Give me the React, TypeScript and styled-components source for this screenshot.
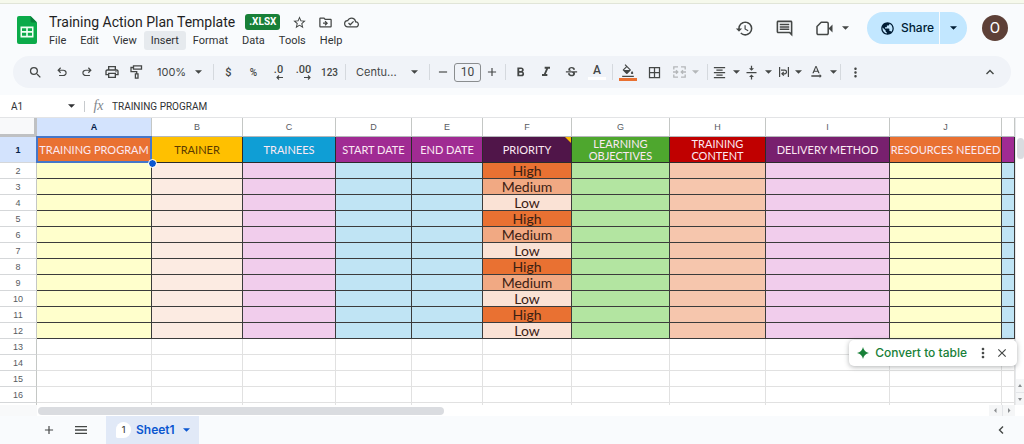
import React from "react";
import styled, { createGlobalStyle, css } from "styled-components";
import {
  MdAdd,
  MdBorderAll,
  MdClose,
  MdFormatAlignCenter,
  MdFormatBold,
  MdFormatColorFill,
  MdFormatItalic,
  MdHistory,
  MdMenu,
  MdMoreVert,
  MdOutlineCloudDone,
  MdOutlineComment,
  MdOutlineDriveFileMove,
  MdOutlinePrint,
  MdPublic,
  MdRemove,
  MdSearch,
  MdStarBorder,
  MdStrikethroughS,
  MdTextRotationNone,
  MdVerticalAlignCenter,
} from "react-icons/md";

const ui = `Roboto, "Liberation Sans", sans-serif`;
const ink = "#444746";

const GlobalStyle = createGlobalStyle`
  *, *::before, *::after { box-sizing: border-box; }
  body { margin: 0; background: #f9fbfd; color: #1f1f1f; font-family: ${ui}; }
  button, input, select {
    font: inherit; color: inherit; margin: 0; padding: 0;
    border: 0; background: none; outline: 0; border-radius: 0;
  }
  button { cursor: pointer; }
  svg { display: block; flex: none; }
`;

const Page = styled.div`
  display: flex;
  flex-direction: column;
  height: 100vh;
  min-height: 300px;
  overflow: hidden;
  border-top: 3px solid #f6f9ec;
`;

const Header = styled.header`
  display: flex;
  align-items: center;
  flex: none;
  height: 53px;
  padding: 0 16px 0 17px;
  border-top: 1px solid #e1e5d8;
`;

const Titles = styled.div`
  display: flex;
  flex-direction: column;
  margin: 3px 0 0 5px;
`;

const TitleRow = styled.div`
  display: flex;
  align-items: center;
  height: 18px;
  padding-left: 7px;
`;

const Title = styled.h1`
  margin: 0;
  font-size: 14px;
  line-height: 18px;
  font-weight: 400;
`;

const FileType = styled.span`
  margin: 0 12px 0 10px;
  padding: 0 4px;
  border-radius: 3px;
  background: #188038;
  color: #fff;
  font-size: 10px;
  font-weight: 700;
  line-height: 16px;
`;

const TitleActions = styled.div`
  display: flex;
  gap: 11px;
  color: ${ink};
`;

const PlainButton = styled.button`
  display: flex;
  align-items: center;
  justify-content: center;
`;

const MenuBar = styled.nav`
  display: flex;
`;

const MenuItem = styled.button<{ $open?: boolean }>`
  height: 19px;
  padding: 0 7px;
  border-radius: 3px;
  font-size: 11px;
  line-height: 19px;
  color: #303234;
  background: ${(p) => (p.$open ? "#e6eaee" : "transparent")};
`;

const HeaderActions = styled.div`
  display: flex;
  align-items: center;
  margin: 0 0 4px auto;
  color: ${ink};
`;

const HeaderIcon = styled(PlainButton)`
  width: 40px;
  height: 32px;
`;

const MeetButton = styled(PlainButton)`
  width: 56px;
  height: 32px;
  gap: 8px;
  margin-right: 7px;
`;

const ShareGroup = styled.div`
  display: flex;
  height: 32px;
  border-radius: 16px;
  overflow: hidden;
  background: #c2e7ff;
  color: #001d35;
`;

const ShareButton = styled(PlainButton)`
  width: 73px;
  gap: 6px;
  padding-left: 8px;
  font: 500 12px/16px Inter, ${ui};
  border-right: 1px solid #f9fbfd;
`;

const ShareMore = styled(PlainButton)`
  width: 27px;
`;

const Avatar = styled.button`
  width: 26px;
  height: 26px;
  margin-left: 15px;
  border-radius: 50%;
  background: #5d4037;
  color: #fff;
  font-size: 15px;
  line-height: 26px;
`;

const Toolbar = styled.div`
  display: flex;
  align-items: center;
  flex: none;
  height: 32px;
  margin: 0 13px 7px;
  padding: 0 9px 0 8px;
  border-radius: 16px;
  background: #f0f3f8;
  color: ${ink};
`;

const Tool = styled.button<{ $w?: number; $dim?: boolean; $small?: boolean }>`
  display: flex;
  align-items: center;
  justify-content: center;
  gap: 6px;
  flex: none;
  width: ${(p) => p.$w ?? 25}px;
  height: 26px;
  font-size: ${(p) => (p.$small ? 10 : 11)}px;
  font-weight: 500;
  color: ${(p) => (p.$dim ? "#b4b7b9" : "inherit")};
`;

const Divider = styled.span`
  flex: none;
  width: 1px;
  height: 16px;
  margin: 0 2px;
  background: #d5d9de;
`;

const Picker = styled.label<{ $w: number }>`
  display: flex;
  align-items: center;
  flex: none;
  width: ${(p) => p.$w}px;
  padding: 0 9px 0 8px;
  select {
    appearance: none;
    flex: 1;
    min-width: 0;
    font: 400 11px/16px Inter, ${ui};
  }
`;

const SizeInput = styled.input`
  flex: none;
  width: 27px;
  height: 19px;
  border: 1px solid #8a8d8f;
  border-radius: 3px;
  text-align: center;
  font-size: 12px;
`;

const Stack = styled.span`
  display: flex;
  flex-direction: column;
  align-items: center;
  gap: 1px;
  font-size: 12px;
  line-height: 12px;
`;

const Swatch = styled.span<{ $color: string }>`
  width: 18px;
  height: 3px;
  background: ${(p) => p.$color};
`;

const Decimal = styled.span`
  display: flex;
  flex-direction: column;
  align-items: flex-end;
  line-height: 10px;
`;

const Spacer = styled.span`
  flex: 1;
`;

const FormulaBar = styled.div`
  display: flex;
  align-items: center;
  flex: none;
  height: 22px;
  background: #fff;
  color: #303234;
  font-size: 10px;
`;

const NameBox = styled.div`
  display: flex;
  align-items: center;
  width: 85px;
  padding: 0 9px 0 11px;
  border-right: 1px solid #c7cacd;
  input { flex: 1; min-width: 0; }
`;

const Fx = styled.span`
  width: 27px;
  text-align: center;
  color: #80868b;
  font: italic 14px/16px "Liberation Serif", serif;
`;

const FormulaInput = styled.input`
  flex: 1;
`;

const GridArea = styled.main`
  position: relative;
  display: flex;
  flex: 1;
  min-height: 0;
  background: #fff;
  border-top: 1px solid #e3e4e6;
`;

const SheetView = styled.div`
  flex: 1;
  min-width: 0;
  overflow: hidden;
`;

const Sheet = styled.table`
  width: 100%;
  table-layout: fixed;
  border-collapse: separate;
  border-spacing: 0;
  font-family: Lato, ${ui};
`;

const Corner = styled.td`
  height: 19px;
  padding: 0;
  background: #f8f9fa;
  border: solid #bfc1c3;
  border-width: 0 3px 3px 0;
`;

const axis = css<{ $on?: boolean }>`
  padding: 0;
  font: ${(p) => (p.$on ? 700 : 400)} 9px/12px "Liberation Sans", sans-serif;
  color: ${(p) => (p.$on ? "#041e49" : "#575b5f")};
  background: ${(p) => (p.$on ? "#d3e3fd" : "#fff")};
`;

const ColumnLabel = styled.th`
  ${axis}
  border-right: 1px solid #c4c7c5;
  border-bottom: 1px solid #b5b8ba;
`;

const RowLabel = styled.th`
  ${axis}
  border-right: 1px solid #c4c7c5;
  border-bottom: 1px solid #d5d7d9;
`;

const HeadCell = styled.td<{ $bg: string; $dark?: boolean }>`
  position: relative;
  height: 26px;
  padding: 0;
  text-align: center;
  white-space: pre;
  font-size: 11px;
  line-height: 12px;
  color: ${(p) => (p.$dark ? "#5a3a00" : "#fbe9f3")};
  background: ${(p) => p.$bg};
  border-right: 1px solid #2b2b2b;
  border-bottom: 1px solid #2b2b2b;
`;

const Selection = styled.span`
  position: absolute;
  inset: -1px -1px -1px -1px;
  border: 2px solid #4577c9;
`;

const FillHandle = styled.span`
  position: absolute;
  right: -5px;
  bottom: -5px;
  z-index: 1;
  width: 7px;
  height: 7px;
  border-radius: 50%;
  background: #0b57d0;
  outline: 1px solid #fff;
`;

const NoteMark = styled.span`
  position: absolute;
  top: 0;
  right: 0;
  border: 3px solid #fbbc04;
  border-left-color: transparent;
  border-bottom-color: transparent;
`;

const Cell = styled.td<{ $bg: string }>`
  height: 16px;
  padding: 0;
  text-align: center;
  font-size: 14px;
  line-height: 15px;
  color: #3a2013;
  background: ${(p) => p.$bg};
  border-right: 1px solid #3b3b3b;
  border-bottom: 1px solid #3b3b3b;
`;

const BlankCell = styled.td`
  height: 16px;
  padding: 0;
  border-right: 1px solid #e1e1e1;
  border-bottom: 1px solid #e1e1e1;
`;

const VScroll = styled.div`
  display: flex;
  flex-direction: column;
  justify-content: space-between;
  flex: none;
  width: 9px;
  padding-top: 20px;
  border-left: 1px solid #e8eaec;
  background: #fff;
`;

const VThumb = styled.span`
  width: 7px;
  height: 21px;
  margin-left: 1px;
  border-radius: 4px;
  background: #dadce0;
`;

const ArrowPair = styled.div<{ $row?: boolean }>`
  display: flex;
  flex-direction: ${(p) => (p.$row ? "row" : "column")};
  color: #8a8d90;
  background: #f5f6f7;
  button { width: ${(p) => (p.$row ? 13 : 8)}px; height: ${(p) => (p.$row ? 11 : 13)}px; }
  button + button { ${(p) => (p.$row ? "border-left" : "border-top")}: 1px solid #e3e5e8; }
`;

const HScroll = styled.div`
  display: flex;
  align-items: center;
  justify-content: space-between;
  flex: none;
  height: 11px;
  padding-right: 9px;
  background: linear-gradient(to right, #f8f9fa 37px, #fff 37px);
`;

const HThumb = styled.span`
  width: 40%;
  height: 8px;
  margin-left: 38px;
  border-radius: 4px;
  background: #dadce0;
`;

const Suggestion = styled.div`
  position: absolute;
  right: 7px;
  bottom: 39px;
  display: flex;
  align-items: center;
  height: 26px;
  padding: 0 6px 0 8px;
  border-radius: 5px;
  background: #fff;
  color: ${ink};
  box-shadow: 0 1px 5px rgba(60, 64, 67, 0.4);
`;

const ConvertButton = styled(PlainButton)`
  gap: 6px;
  margin-right: 6px;
  color: #188038;
  font: 500 12px/16px Inter, ${ui};
`;

const SmallButton = styled(PlainButton)`
  width: 19px;
`;

const SheetBar = styled.footer`
  display: flex;
  align-items: center;
  flex: none;
  height: 28px;
  padding: 0 18px 0 33px;
  color: ${ink};
`;

const BarButton = styled(PlainButton)`
  width: 32px;
  height: 28px;
`;

const SheetTab = styled.button`
  display: flex;
  align-items: center;
  height: 28px;
  margin-left: 9px;
  padding: 0 9px 0 10px;
  background: #e1e9f7;
  color: #0b57d0;
  font: 600 12px/16px Inter, ${ui};
  svg { margin-left: 8px; }
`;

const TabCount = styled.span`
  width: 15px;
  height: 16px;
  margin-right: 5px;
  border-radius: 8px 8px 8px 2px;
  background: #fff;
  color: ${ink};
  font-size: 9px;
  font-weight: 500;
  line-height: 16px;
`;

const Caret = () => (
  <svg width="7" height="4" viewBox="0 0 8 4" fill="currentColor" aria-hidden="true">
    <path d="M0 0h8L4 4z" />
  </svg>
);

const SheetsLogo = () => (
  <svg width="20" height="28" viewBox="0 0 20 28" aria-hidden="true">
    <path d="M2 0h11.500L20 6.500V26a2 2 0 0 1-2 2H2a2 2 0 0 1-2-2V2a2 2 0 0 1 2-2z" fill="#0cab4a" />
    <path d="M13.500 0 20 6.500h-5a1.500 1.500 0 0 1-1.500-1.500z" fill="#08803a" />
    <path d="M3.500 10.500h13v11h-13zM5 12.200v2.900h4.200v-2.900zm5.800 0v2.900H15v-2.900zM5 16.800v3h4.200v-3zm5.800 0v3H15v-3z" fill="#f1fff4" fillRule="evenodd" />
  </svg>
);

const Undo = ({ flip = false }: { flip?: boolean }) => (
  <svg width="14" height="14" viewBox="0 -960 960 960" fill="currentColor" aria-hidden="true">
    <path
      transform={flip ? "matrix(-1 0 0 1 960 0)" : undefined}
      d="M280-200v-80h284q63 0 109.500-40T720-420q0-60-46.500-100T564-560H312l104 104-56 56-200-200 200-200 56 56-104 104h252q97 0 169.500 63T800-420q0 94-72.500 157T564-200H280Z"
    />
  </svg>
);

const PaintRoller = () => (
  <svg width="13" height="14" viewBox="0 0 13 14" fill="none" stroke="currentColor" strokeWidth="1.300" aria-hidden="true">
    <path d="M3.500 .8h8v3.400h-8zM3.500 2.500H1v4.200h5.700v2M5.400 8.900h2.600v4.300H5.400z" />
  </svg>
);

const Meet = () => (
  <svg width="18" height="15" viewBox="0 0 18 15" fill="none" stroke="currentColor" strokeWidth="1.500" aria-hidden="true">
    <path d="M5.200 1.300H11a1.200 1.200 0 0 1 1.200 1.200v9.800a1.200 1.200 0 0 1-1.200 1.200H2.200A1.200 1.200 0 0 1 1 12.300V5.500z" strokeLinejoin="round" />
    <path d="M12.500 7.500 16.500 3.500v8z" fill="currentColor" stroke="none" />
  </svg>
);

const Merge = () => (
  <svg width="13" height="12" viewBox="0 0 13 12" fill="none" stroke="currentColor" strokeWidth="1.300" aria-hidden="true">
    <path d="M5 .8H.8V3.500M.8 8.500v2.700H5M8 .8h4.200V3.500M12.200 8.500v2.700H8M0 6h4.500M3 4.200 4.800 6 3 7.800M13 6H8.500M10 4.200 8.200 6 10 7.800" />
  </svg>
);

const Wrap = () => (
  <svg width="10" height="12" viewBox="0 0 10 12" fill="none" stroke="currentColor" strokeWidth="1.200" aria-hidden="true">
    <path d="M.6 1v10M9.400 1v10M2 4.200h3.700a1.800 1.800 0 0 1 0 3.600H3.200M4.800 5.900 2.900 7.800l1.900 1.900" />
  </svg>
);

const SmallArrow = ({ right = false }: { right?: boolean }) => (
  <svg width="7" height="5" viewBox="0 0 7 5" fill="none" stroke="currentColor" strokeWidth="1.100" aria-hidden="true">
    <path d={right ? "M0 2.500h6M4 .5l2 2-2 2" : "M7 2.500H1M3 .5l-2 2 2 2"} />
  </svg>
);

const Chevron = ({ d }: { d: string }) => (
  <svg width="10" height="10" viewBox="0 0 10 10" fill="none" stroke="currentColor" strokeWidth="1.400" aria-hidden="true">
    <path d={d} />
  </svg>
);

const Tick = ({ d }: { d: string }) => (
  <svg width="100%" height="5" viewBox="0 0 6 5" fill="currentColor" aria-hidden="true">
    <path d={d} />
  </svg>
);

const Sparkle = () => (
  <svg width="12" height="12" viewBox="0 0 12 12" fill="currentColor" aria-hidden="true">
    <path d="M6 0Q7 5 12 6 7 7 6 12 5 7 0 6 5 5 6 0z" />
  </svg>
);

const columns = [
  { id: "A", width: 115, title: "TRAINING PROGRAM", head: "#e97132", body: "#ffffcc" },
  { id: "B", width: 91, title: "TRAINER", head: "#ffc000", body: "#fcebe2", dark: true },
  { id: "C", width: 93, title: "TRAINEES", head: "#0f9ed5", body: "#f1cdec" },
  { id: "D", width: 76, title: "START DATE", head: "#a02b93", body: "#c0e4f4" },
  { id: "E", width: 71, title: "END DATE", head: "#a02b93", body: "#c0e4f4" },
  { id: "F", width: 89, title: "PRIORITY", head: "#501549", body: "" },
  { id: "G", width: 98, title: "LEARNING\nOBJECTIVES", head: "#4ea72e", body: "#b3e5a1" },
  { id: "H", width: 96, title: "TRAINING\nCONTENT", head: "#c00000", body: "#f6c6ad" },
  { id: "I", width: 124, title: "DELIVERY METHOD", head: "#78206e", body: "#f1cdec" },
  { id: "J", width: 112, title: "RESOURCES NEEDED", head: "#e97132", body: "#ffffcc" },
  { id: "", width: 0, title: "", head: "#a02b93", body: "#c0e4f4" },
];

const priorities = [
  { name: "High", color: "#e97132" },
  { name: "Medium", color: "#f1a983" },
  { name: "Low", color: "#fae2d5" },
];

// The last filled row closes the list with "Low" in place of "Medium".
const filledRows = Array.from({ length: 11 }, (_, i) => ({
  number: i + 2,
  priority: i === 10 ? priorities[2] : priorities[i % 3],
}));
const blankRows = ["13", "14", "15", "16", ""];
const menus = ["File", "Edit", "View", "Insert", "Format", "Data", "Tools", "Help"];

export default function App() {
  return (
    <Page>
      <GlobalStyle />
      <Header>
        <SheetsLogo />
        <Titles>
          <TitleRow>
            <Title>Training Action Plan Template</Title>
            <FileType>.XLSX</FileType>
            <TitleActions>
              <PlainButton aria-label="Star"><MdStarBorder size={15} /></PlainButton>
              <PlainButton aria-label="Move"><MdOutlineDriveFileMove size={15} /></PlainButton>
              <PlainButton aria-label="Saved to Drive"><MdOutlineCloudDone size={15} /></PlainButton>
            </TitleActions>
          </TitleRow>
          <MenuBar>
            {menus.map((m) => (
              <MenuItem key={m} $open={m === "Insert"}>{m}</MenuItem>
            ))}
          </MenuBar>
        </Titles>
        <HeaderActions>
          <HeaderIcon aria-label="Version history"><MdHistory size={19} /></HeaderIcon>
          <HeaderIcon aria-label="Comments"><MdOutlineComment size={19} /></HeaderIcon>
          <MeetButton aria-label="Join a call"><Meet /><Caret /></MeetButton>
          <ShareGroup>
            <ShareButton><MdPublic size={15} />Share</ShareButton>
            <ShareMore aria-label="Sharing options"><Caret /></ShareMore>
          </ShareGroup>
          <Avatar aria-label="Account">O</Avatar>
        </HeaderActions>
      </Header>

      <Toolbar role="toolbar">
        <Tool $w={28} aria-label="Search menus"><MdSearch size={15} /></Tool>
        <Tool aria-label="Undo"><Undo /></Tool>
        <Tool aria-label="Redo"><Undo flip /></Tool>
        <Tool aria-label="Print"><MdOutlinePrint size={16} /></Tool>
        <Tool aria-label="Paint format"><PaintRoller /></Tool>
        <Picker $w={62}>
          <select aria-label="Zoom"><option>100%</option></select>
          <Caret />
        </Picker>
        <Divider />
        <Tool>$</Tool>
        <Tool $small>%</Tool>
        <Tool aria-label="Decrease decimal places"><Decimal>.0<SmallArrow /></Decimal></Tool>
        <Tool aria-label="Increase decimal places"><Decimal>.00<SmallArrow right /></Decimal></Tool>
        <Tool $w={27} $small>123</Tool>
        <Divider />
        <Picker $w={79}>
          <select aria-label="Font"><option>Centu...</option></select>
          <Caret />
        </Picker>
        <Divider />
        <Tool $w={22} aria-label="Decrease font size"><MdRemove size={14} /></Tool>
        <SizeInput aria-label="Font size" defaultValue="10" />
        <Tool $w={22} aria-label="Increase font size"><MdAdd size={14} /></Tool>
        <Divider />
        <Tool aria-label="Bold"><MdFormatBold size={15} /></Tool>
        <Tool aria-label="Italic"><MdFormatItalic size={16} /></Tool>
        <Tool $w={26} aria-label="Strikethrough"><MdStrikethroughS size={15} /></Tool>
        <Tool $w={26} aria-label="Text color"><Stack>A<Swatch $color="#fff" /></Stack></Tool>
        <Divider />
        <Tool $w={26} aria-label="Fill color">
          <Stack><MdFormatColorFill size={14} viewBox="0 0 24 20" /><Swatch $color="#e97132" /></Stack>
        </Tool>
        <Tool $w={26} aria-label="Borders"><MdBorderAll size={15} /></Tool>
        <Tool $w={38} $dim aria-label="Merge cells"><Merge /><Caret /></Tool>
        <Divider />
        <Tool $w={32} aria-label="Horizontal align"><MdFormatAlignCenter size={15} /><Caret /></Tool>
        <Tool $w={32} aria-label="Vertical align"><MdVerticalAlignCenter size={15} /><Caret /></Tool>
        <Tool $w={32} aria-label="Text wrapping"><Wrap /><Caret /></Tool>
        <Tool $w={32} aria-label="Text rotation"><MdTextRotationNone size={16} /><Caret /></Tool>
        <Divider />
        <Tool aria-label="More"><MdMoreVert size={15} /></Tool>
        <Spacer />
        <Tool aria-label="Hide the menus"><Chevron d="M1.500 7 5 3.500 8.500 7" /></Tool>
      </Toolbar>

      <FormulaBar>
        <NameBox>
          <input aria-label="Cell" defaultValue="A1" />
          <Caret />
        </NameBox>
        <Fx>fx</Fx>
        <FormulaInput aria-label="Formula" defaultValue="TRAINING PROGRAM" />
      </FormulaBar>

      <GridArea>
        <SheetView>
          <Sheet>
            <colgroup>
              <col style={{ width: 37 }} />
              {columns.map((c) => (
                <col key={c.id} style={{ width: c.width || undefined }} />
              ))}
            </colgroup>
            <thead>
              <tr>
                <Corner />
                {columns.map((c) => (
                  <ColumnLabel key={c.id} scope="col" $on={c.id === "A"}>{c.id}</ColumnLabel>
                ))}
              </tr>
            </thead>
            <tbody>
              <tr>
                <RowLabel scope="row" $on>1</RowLabel>
                {columns.map((c) => (
                  <HeadCell key={c.id} $bg={c.head} $dark={c.dark}>
                    {c.title}
                    {c.id === "A" && <><Selection /><FillHandle /></>}
                    {c.id === "F" && <NoteMark />}
                  </HeadCell>
                ))}
              </tr>
              {filledRows.map((row) => (
                <tr key={row.number}>
                  <RowLabel scope="row">{row.number}</RowLabel>
                  {columns.map((c) => (
                    <Cell key={c.id} $bg={c.body || row.priority.color}>
                      {c.id === "F" ? row.priority.name : null}
                    </Cell>
                  ))}
                </tr>
              ))}
              {blankRows.map((n) => (
                <tr key={n}>
                  <RowLabel scope="row">{n}</RowLabel>
                  {columns.map((c) => <BlankCell key={c.id} />)}
                </tr>
              ))}
            </tbody>
          </Sheet>
        </SheetView>
        <VScroll>
          <VThumb />
          <ArrowPair>
            <button aria-label="Scroll up"><Tick d="M1 4h4L3 1z" /></button>
            <button aria-label="Scroll down"><Tick d="M1 1h4L3 4z" /></button>
          </ArrowPair>
        </VScroll>
        <Suggestion>
          <ConvertButton><Sparkle />Convert to table</ConvertButton>
          <SmallButton aria-label="Suggestion options"><MdMoreVert size={16} /></SmallButton>
          <SmallButton aria-label="Dismiss"><MdClose size={14} /></SmallButton>
        </Suggestion>
      </GridArea>

      <HScroll>
        <HThumb />
        <ArrowPair $row>
          <button aria-label="Scroll left"><Tick d="M4 0v5L1.500 2.500z" /></button>
          <button aria-label="Scroll right"><Tick d="M2 0v5l2.500-2.500z" /></button>
        </ArrowPair>
      </HScroll>

      <SheetBar>
        <BarButton aria-label="Add sheet"><MdAdd size={14} /></BarButton>
        <BarButton aria-label="All sheets"><MdMenu size={16} /></BarButton>
        <SheetTab><TabCount>1</TabCount>Sheet1<Caret /></SheetTab>
        <Spacer />
        <PlainButton aria-label="Show side panel"><Chevron d="M7 1.500 3.500 5 7 8.500" /></PlainButton>
      </SheetBar>
    </Page>
  );
}
